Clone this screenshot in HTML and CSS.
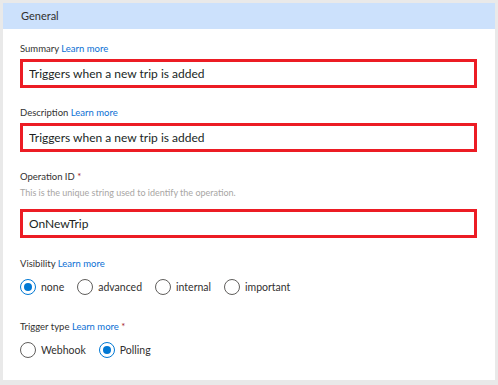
FILE: index.html
```html
<!DOCTYPE html>
<html lang="en">
<head>
  <meta charset="UTF-8" />
  <title>General</title>
  <link rel="stylesheet" href="styles.css">
</head>
<body>

<div class="panel">
  <div class="panel-header">General</div>

  <div class="panel-body">
    <div class="field">
      <label>Summary <a href="#">Learn more</a></label>
      <div class="box"><input type="text" value="Triggers when a new trip is added"></div>
    </div>

    <div class="field">
      <label>Description <a href="#">Learn more</a></label>
      <div class="box"><input type="text" value="Triggers when a new trip is added"></div>
    </div>

    <div class="field field-last">
      <label>Operation ID <span class="req">*</span></label>
      <div class="hint">This is the unique string used to identify the operation.</div>
      <div class="box"><input type="text" value="OnNewTrip"></div>
    </div>

    <div class="field field-choice">
      <label>Visibility <a href="#">Learn more</a></label>
      <div class="radios">
        <span class="radio checked"><i></i>none</span>
        <span class="radio"><i></i>advanced</span>
        <span class="radio"><i></i>internal</span>
        <span class="radio"><i></i>important</span>
      </div>
    </div>

    <div class="field field-choice">
      <label>Trigger type <a href="#">Learn more</a> <span class="req">*</span></label>
      <div class="radios">
        <span class="radio"><i></i>Webhook</span>
        <span class="radio checked"><i></i>Polling</span>
      </div>
    </div>
  </div>
</div>

</body>
</html>
```

FILE: styles.css
```css
* {
  box-sizing: border-box;
  font-family: Lato, sans-serif;
}
html, body {
  margin: 0;
  background-color: #e9e9e9;
}
body {
  padding: 3px 3px 5px 3px;
}
.panel {
  background-color: #fff;
  height: 377px;
}
.panel-header {
  background-color: #cce1fc;
  height: 26px;
  padding: 0 18px;
  font-size: 11px;
  line-height: 26px;
  color: #323130;
}
.panel-body {
  padding: 13px 18px 0 17px;
}
.field {
  margin-bottom: 18px;
}
.field-last {
  margin-bottom: 19px;
}
.field label {
  display: block;
  font-size: 9.5px;
  line-height: 12px;
  padding-top: 1px;
  color: #323130;
  margin-bottom: 4px;
}
.field label a {
  color: #0b6fd4;
  text-decoration: none;
}
.req {
  color: #a4262c;
}
.hint {
  font-size: 9px;
  color: #a8a6a4;
  line-height: 12px;
  margin: 0 0 10px;
}
.box {
  border: 3px solid #ec1c24;
  height: 29px;
  width: 457px;
}
.box input {
  width: 100%;
  height: 100%;
  border: none;
  outline: none;
  padding: 0 6px;
  font-family: Lato, sans-serif;
  font-size: 12px;
  color: #201f1e;
  background: #fff;
}
.field-choice {
  margin-bottom: 25px;
}
.field-choice label {
  margin-bottom: 9px;
}
.radios {
  display: flex;
  gap: 13px;
  align-items: center;
}
.radio {
  display: flex;
  align-items: center;
  gap: 5px;
  font-size: 10.5px;
  color: #323130;
}
.radio i {
  width: 16px;
  height: 16px;
  border-radius: 50%;
  border: 1px solid #605e5c;
  display: flex;
  align-items: center;
  justify-content: center;
}
.radio.checked i {
  border-color: #0078d4;
}
.radio.checked i::after {
  content: "";
  width: 8px;
  height: 8px;
  border-radius: 50%;
  background-color: #0078d4;
}
```
